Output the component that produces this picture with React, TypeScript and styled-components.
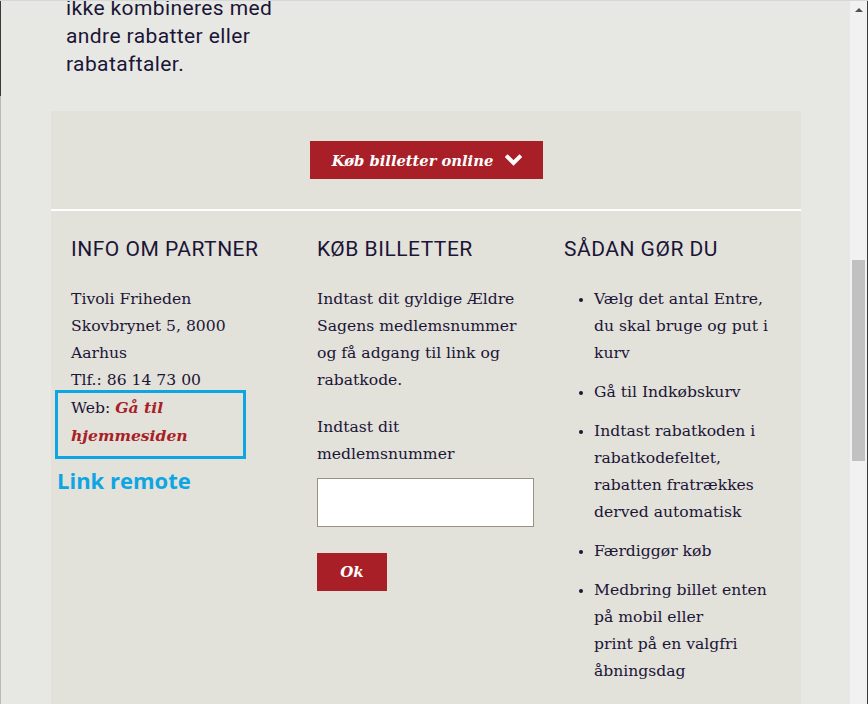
import React from "react";
import styled, { createGlobalStyle } from "styled-components";

const Global = createGlobalStyle`
  html, body { margin: 0; padding: 0; background: #e7e8e3; overflow: hidden; }
  #root { height: 704px; }
`;

const INK = "#1b1537";
const RED = "#a91f28";
const SERIF = `"DejaVu Serif", Georgia, serif`;
const SANS = `"Roboto", "Liberation Sans", sans-serif`;

const Frame = styled.div`
  display: flex;
  height: 704px;
  border-top: 1px solid #d5d7d9;
  box-sizing: border-box;
`;

const LeftEdge = styled.div`
  width: 1px;
  flex: none;
  background: linear-gradient(#3a3a3a 0, #3a3a3a 95px, #b8b8b8 95px);
`;

const Main = styled.main`
  flex: 1;
  overflow: hidden;
  background: #e7e8e3;
`;

const Intro = styled.p`
  margin: -7px 0 0 65px;
  font-family: ${SANS};
  font-size: 21px;
  line-height: 28px;
  color: ${INK};
  letter-spacing: 0.4px;
`;

const Panel = styled.section`
  margin: 33px 49px 0 50px;
  background: #e2e1da;
  min-height: 600px;
`;

const Top = styled.div`
  display: flex;
  justify-content: center;
  padding: 30px 0 30px;
  border-bottom: 2px solid #ffffff;
`;

const BuyButton = styled.button`
  display: flex;
  align-items: center;
  gap: 12px;
  height: 38px;
  width: 233px;
  justify-content: center;
  padding: 0 0 0 2px;
  border: none;
  background: ${RED};
  color: #fff;
  font-family: ${SERIF};
  font-style: italic;
  font-weight: 700;
  font-size: 14.7px;
`;

const Chevron = styled.svg`
  width: 17px;
  height: 13px;
  flex: none;
`;

const Columns = styled.div`
  display: grid;
  grid-template-columns: 246px 247px 1fr;
  padding: 24px 20px 0 20px;
`;

const Col = styled.div``;

const Heading = styled.h2`
  margin: 0 0 23px;
  font-family: ${SANS};
  font-weight: 400;
  font-size: 21px;
  line-height: 28px;
  color: ${INK};
  letter-spacing: 0.5px;
`;

const Text = styled.p<{ $mt?: number }>`
  margin: ${(p) => p.$mt ?? 0}px 0 0;
  font-family: ${SERIF};
  font-size: 15.6px;
  line-height: 27px;
  color: ${INK};
`;

const WebLink = styled.a`
  color: ${RED};
  font-style: italic;
  font-weight: 700;
  text-decoration: none;
`;

const AnnotBox = styled.div`
  margin: -4px 0 0 -16px;
  width: 172px;
  padding: 1px 0 6px 13px;
  border: 3px solid #0ea5e3;
`;

const AnnotLabel = styled.div`
  margin: 6px 0 0 -14px;
  font-family: "Open Sans", sans-serif;
  font-weight: 700;
  font-size: 22px;
  line-height: 30px;
  color: #0ea5e3;
`;

const Input = styled.input`
  display: block;
  margin-top: 10px;
  width: 217px;
  height: 49px;
  box-sizing: border-box;
  border: 1px solid #9a9384;
  background: #fff;
`;

const OkButton = styled.button`
  margin-top: 26px;
  width: 70px;
  height: 38px;
  border: none;
  background: ${RED};
  color: #fff;
  font-family: ${SERIF};
  font-style: italic;
  font-weight: 700;
  font-size: 15px;
`;

const Steps = styled.ul`
  margin: 0;
  padding: 0 0 0 30px;
  font-family: ${SERIF};
  font-size: 15.6px;
  line-height: 27px;
  color: ${INK};
`;

const Step = styled.li`
  margin-bottom: 12px;
  &::marker { font-size: 13px; }
`;

const Scrollbar = styled.div`
  width: 17px;
  flex: none;
  background: #f1f1f1;
  border-right: 1px solid #3a3a3a;
  display: flex;
  flex-direction: column;
  align-items: center;
`;

const Arrow = styled.div`
  margin-top: 7px;
  width: 0;
  height: 0;
  border-left: 4px solid transparent;
  border-right: 4px solid transparent;
  border-bottom: 4px solid #505050;
`;

const Thumb = styled.div`
  margin-top: 248px;
  width: 13px;
  height: 201px;
  background: #c1c1c1;
`;

export default function App() {
  return (
    <>
      <Global />
      <Frame>
        <LeftEdge />
        <Main>
          <Intro>
            ikke kombineres med
            <br />
            andre rabatter eller
            <br />
            rabataftaler.
          </Intro>
          <Panel>
            <Top>
              <BuyButton>
                Køb billetter online
                <Chevron viewBox="0 0 17 13" aria-hidden="true">
                  <polyline
                    points="2.5,3 8.5,9 14.5,3"
                    fill="none"
                    stroke="#fff"
                    strokeWidth="4"
                    strokeLinecap="square"
                  />
                </Chevron>
              </BuyButton>
            </Top>
            <Columns>
              <Col>
                <Heading>INFO OM PARTNER</Heading>
                <Text>
                  Tivoli Friheden
                  <br />
                  Skovbrynet 5, 8000
                  <br />
                  Aarhus
                  <br />
                  Tlf.: 86 14 73 00
                </Text>
                <AnnotBox>
                  <Text>
                    Web: <WebLink href="#">Gå til</WebLink>
                    <br />
                    <WebLink href="#">hjemmesiden</WebLink>
                  </Text>
                </AnnotBox>
                <AnnotLabel>Link remote</AnnotLabel>
              </Col>
              <Col>
                <Heading>KØB BILLETTER</Heading>
                <Text>
                  Indtast dit gyldige Ældre
                  <br />
                  Sagens medlemsnummer
                  <br />
                  og få adgang til link og
                  <br />
                  rabatkode.
                </Text>
                <Text $mt={20}>
                  Indtast dit
                  <br />
                  medlemsnummer
                </Text>
                <Input type="text" />
                <OkButton>Ok</OkButton>
              </Col>
              <Col>
                <Heading>SÅDAN GØR DU</Heading>
                <Steps>
                  <Step>
                    Vælg det antal Entre,
                    <br />
                    du skal bruge og put i
                    <br />
                    kurv
                  </Step>
                  <Step>Gå til Indkøbskurv</Step>
                  <Step>
                    Indtast rabatkoden i
                    <br />
                    rabatkodefeltet,
                    <br />
                    rabatten fratrækkes
                    <br />
                    derved automatisk
                  </Step>
                  <Step>Færdiggør køb</Step>
                  <Step>
                    Medbring billet enten
                    <br />
                    på mobil eller
                    <br />
                    print på en valgfri
                    <br />
                    åbningsdag
                  </Step>
                </Steps>
              </Col>
            </Columns>
          </Panel>
        </Main>
        <Scrollbar>
          <Arrow />
          <Thumb />
        </Scrollbar>
      </Frame>
    </>
  );
}
